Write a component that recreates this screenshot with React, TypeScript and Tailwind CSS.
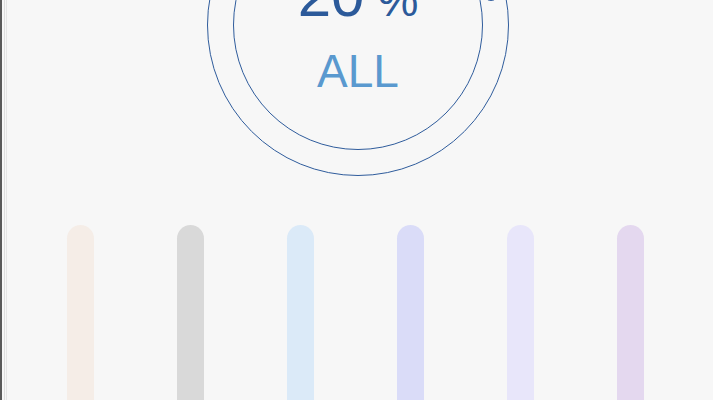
const bars = [
  "bg-[#f5ede7]",
  "bg-[#d9d9d9]",
  "bg-[#dbeaf8]",
  "bg-[#dadcf8]",
  "bg-[#e8e6fa]",
  "bg-[#e4d8ef]",
];

export default function App() {
  return (
    <div className="flex h-[400px] w-full overflow-hidden bg-[#f7f7f7] font-['Liberation_Sans',Arial,sans-serif]">
      {/* left edge lines */}
      <div className="flex h-full shrink-0">
        <div className="h-full w-[2px] bg-[#5a5a5a]" />
        <div className="h-full w-[2px] bg-[#f7f7f7]" />
        <div className="h-full w-px bg-[#dedede]" />
        <div className="h-full w-px bg-[#f7f7f7]" />
        <div className="h-full w-px bg-[#e6e6e6]" />
      </div>

      <div className="flex flex-1 flex-col">
        {/* gauge */}
        <div className="relative ml-[200px] mt-[-126px] h-[302px] w-[302px] shrink-0 rounded-full border-[1.5px] border-[#2f5c9c]">
          <div className="absolute inset-[25px] rounded-full border-[1.5px] border-[#2f5c9c]" />
          <div className="absolute left-[275px] top-[110px] h-[16px] w-[16px] rounded-full border-[1.5px] border-[#2f5c9c] bg-[#f7f7f7]" />
          <div className="relative flex flex-col items-center pt-[91px]">
            <div className="flex items-baseline leading-none text-[#2c5a9a]">
              <span className="text-[60px] leading-none">20</span>
              <span className="ml-[13px] text-[46px] leading-none">%</span>
            </div>
            <div className="mt-[22px] text-[46px] leading-none text-[#5a99cf]">ALL</div>
          </div>
        </div>

        {/* bars */}
        <div className="mt-[49px] flex gap-[83px] pl-[60px]">
          {bars.map((c, i) => (
            <div key={i} className={`h-[200px] w-[27px] rounded-t-full ${c}`} />
          ))}
        </div>
      </div>
    </div>
  );
}
